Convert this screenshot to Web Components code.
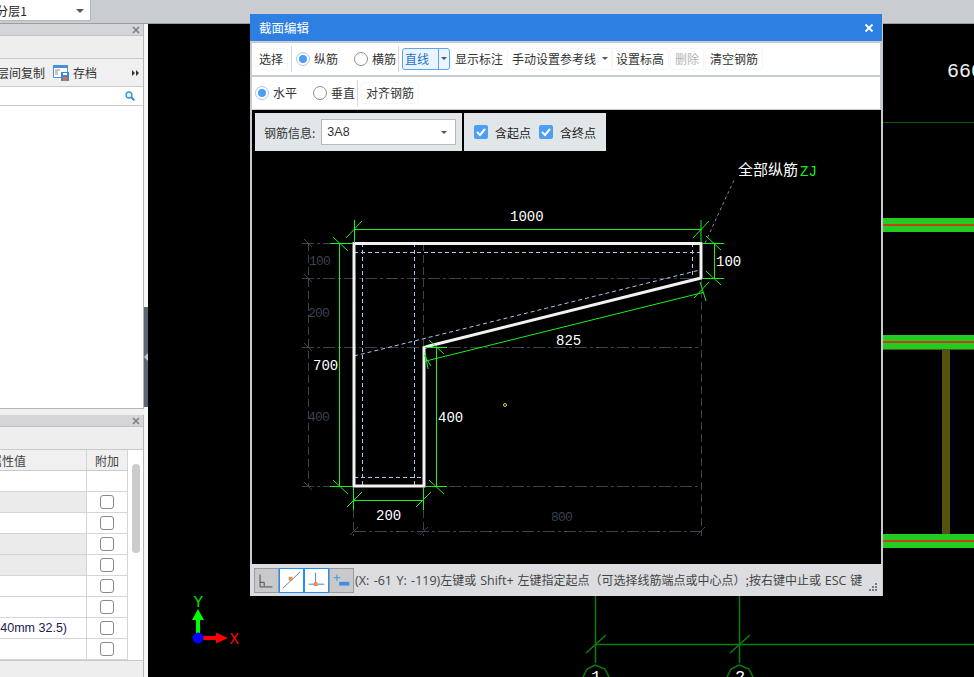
<!DOCTYPE html>
<html>
<head>
<meta charset="utf-8">
<title>截面编辑</title>
<style>
html,body{margin:0;padding:0;height:100%;overflow:hidden;background:#000;}
body{font:12px "Noto Sans CJK SC","Liberation Sans",sans-serif;color:#333;}
/* latin runs in the status line are set wider than the chinese ones */
status-bar span{font:12.5px "Open Sans","Noto Sans CJK SC",sans-serif;}
</style>
</head>
<body>
<app-desktop>
  <top-bar slot="top"></top-bar>
  <side-panel slot="left" style="height:385px">
    <panel-tools></panel-tools>
  </side-panel>
  <side-panel slot="left" style="flex:1">
    <prop-table></prop-table>
  </side-panel>
  <cad-view slot="main"></cad-view>
  <section-dialog slot="float" heading="截面编辑">
    <tool-row slot="tools">
      <tool-button>选择</tool-button>
      <tool-sep></tool-sep>
      <radio-item checked style="margin-left:4px">纵筋</radio-item>
      <radio-item style="margin-left:16px">横筋</radio-item>
      <tool-sep style="margin-left:2px"></tool-sep>
      <split-button style="margin-left:3px">直线</split-button>
      <tool-button>显示标注</tool-button>
      <tool-button style="margin-left:-1px" arrow>手动设置参考线</tool-button>
      <tool-button style="margin-left:-2px">设置标高</tool-button>
      <tool-button style="margin-left:1px" disabled>删除</tool-button>
      <tool-button style="margin-left:1px">清空钢筋</tool-button>
    </tool-row>
    <tool-row slot="tools">
      <radio-item checked style="margin-left:1px">水平</radio-item>
      <radio-item style="margin-left:16px">垂直</radio-item>
      <tool-sep style="margin-left:2px"></tool-sep>
      <tool-button style="margin-left:3px">对齐钢筋</tool-button>
    </tool-row>
    <section-drawing slot="canvas"></section-drawing>
    <status-bar slot="status"><span>(X: -61 Y: -119)</span>左键或 <span>Shift+</span> 左键指定起点（可选择线筋端点或中心点）;按右键中止或 <span>ESC</span> 键</status-bar>
  </section-dialog>
</app-desktop>

<script>
const FONT = '"Noto Sans CJK SC","Liberation Sans",sans-serif';

class AppDesktop extends HTMLElement {
  constructor() {
    super();
    this.attachShadow({ mode: "open" }).innerHTML = `
<style>
:host{display:grid;grid-template-rows:24px 653px;grid-template-columns:144px 4px 826px;width:974px;height:677px;position:relative;overflow:hidden;background:#000;}
.top{grid-column:1 / 4;}
.left{display:flex;flex-direction:column;gap:6px;background:#f0f0f0;min-height:0;}
.strip{background:#f7f7f7;position:relative;}
.grab{position:absolute;left:0;right:0;top:283px;height:100px;background:#5c6670;}
.grab::after{content:"";position:absolute;left:0;top:46px;border:4px solid transparent;border-right-color:#c5c8cc;border-left:0;}
.main{min-width:0;}
</style>
<div class="top"><slot name="top"></slot></div>
<div class="left"><slot name="left"></slot></div>
<div class="strip"><div class="grab"></div></div>
<div class="main"><slot name="main"></slot></div>
<slot name="float"></slot>`;
  }
}
customElements.define("app-desktop", AppDesktop);

class TopBar extends HTMLElement {
  constructor() {
    super();
    this.attachShadow({ mode: "open" }).innerHTML = `
<style>
:host{display:block;height:24px;box-sizing:border-box;background:#c9ccd1;border-bottom:1px solid #9b9ea3;}
.combo{width:91px;height:21px;box-sizing:border-box;background:#fff;border:1px solid #b5b7ba;border-width:0 1px 1px 0;display:flex;justify-content:flex-end;align-items:center;overflow:hidden;font-size:12px;color:#222;padding-right:63px;position:relative;white-space:nowrap;}
.combo::after{content:"";position:absolute;right:6px;top:9px;border:4px solid transparent;border-top-color:#555;border-bottom:0;}
</style>
<div class="combo">第1分层1</div>`;
  }
}
customElements.define("top-bar", TopBar);

class SidePanel extends HTMLElement {
  constructor() {
    super();
    this.attachShadow({ mode: "open" }).innerHTML = `
<style>
:host{display:flex;flex-direction:column;box-sizing:border-box;background:#eee;border-right:1px solid #b4b6b9;min-height:0;}
.head{height:12px;flex:none;background:#d3d5d9;border-bottom:1px solid #bfc1c4;box-sizing:border-box;position:relative;}
.head svg{position:absolute;right:3px;top:2px;}
.blank{height:23px;flex:none;background:#eee;border-bottom:1px solid #c9c9c9;box-sizing:border-box;}
::slotted(*){flex:1;min-height:0;}
</style>
<div class="head"><svg width="8" height="8" viewBox="0 0 8 8"><path d="M1 1l6 6M7 1l-6 6" stroke="#7c7f84" stroke-width="1.6"/></svg></div>
<div class="blank"></div>
<slot></slot>`;
  }
}
customElements.define("side-panel", SidePanel);

class PanelTools extends HTMLElement {
  constructor() {
    super();
    this.attachShadow({ mode: "open" }).innerHTML = `
<style>
:host{display:flex;flex-direction:column;background:#fff;border-bottom:1px solid #b4b6b9;}
.bar{height:28px;flex:none;box-sizing:border-box;background:#f0f0f0;border-bottom:1px solid #c9c9c9;display:flex;align-items:center;justify-content:flex-end;overflow:hidden;white-space:nowrap;color:#333;padding-right:3px;gap:4px;}
.bar svg{flex:none;}
.more{margin-left:31px;margin-right:1px;}
.search{height:19px;flex:none;box-sizing:border-box;border-bottom:1px solid #c9c9c9;display:flex;justify-content:flex-end;align-items:center;padding-right:8px;background:#fff;}
</style>
<div class="bar"><span>楼层间复制</span>
<svg style="margin-left:4px" width="16" height="16" viewBox="0 0 16 16"><path d="M.5 .5h14v12h-14z" fill="#fff" stroke="#4a8fdc"/><path d="M0 0h15v3H0z" fill="#4a8fdc"/><path d="M2 5h5M2 7h3M2 9h3" stroke="#888"/><path d="M8 7h8v9H8z" fill="#3d86d8"/><path d="M10 12h4v4h-4z" fill="#e8702a"/><path d="M10 8h4v2h-4z" fill="#fff"/></svg>
<span>存档</span>
<svg class="more" width="7" height="6" viewBox="0 0 7 6"><path d="M0 0l3 3-3 3zM4 0l3 3-3 3z" fill="#333"/></svg></div>
<div class="search"><svg width="10" height="10" viewBox="0 0 10 10"><circle cx="4" cy="4" r="3" fill="#dff0fb" stroke="#3f9ad6" stroke-width="1.4"/><path d="M6.3 6.3L9.4 9.4" stroke="#2f7fb8" stroke-width="1.8"/></svg></div>`;
  }
}
customElements.define("panel-tools", PanelTools);

class PropTable extends HTMLElement {
  constructor() {
    super();
    const root = this.attachShadow({ mode: "open" });
    // gray rows are the read-only ones, row 0 has no checkbox
    const rows = [
      { t: "", box: false }, { g: 1 }, {}, { g: 1 }, { g: 1 }, {}, {},
      { t: "(P.O 42.5 40mm 32.5)" }, {}
    ];
    let html = "";
    for (const r of rows) {
      html += `<div class="row"><div class="val ${r.g ? "gray" : ""}"><span>${r.t || ""}</span></div><div class="add">${r.box === false ? "" : '<i class="box"></i>'}</div></div>`;
    }
    root.innerHTML = `
<style>
:host{display:block;position:relative;background:#eee;}
.wrap{width:143px;background:#fff;border-bottom:1px solid #c9c9c9;box-sizing:border-box;position:relative;}
.row,.hd{display:grid;grid-template-columns:87px 41px;height:21px;box-sizing:border-box;border-bottom:1px solid #d5d5d5;width:128px;}
.row:last-of-type{height:18px;border-bottom:0;}
.hd{background:#f0f0f0;border-bottom:1px solid #c9c9c9;color:#444;}
.hd>div{display:flex;align-items:center;overflow:hidden;white-space:nowrap;}
.hd>div:first-child{justify-content:flex-end;padding-right:60px;border-right:1px solid #d5d5d5;}
.hd>div:last-child{justify-content:center;border-right:1px solid #d5d5d5;}
.val{display:flex;justify-content:flex-end;align-items:center;overflow:hidden;white-space:nowrap;border-right:1px solid #d5d5d5;color:#1a1a55;font:12.5px "Liberation Sans",sans-serif;padding-right:19px;}
.gray{background:#ebebeb;}
.add{display:flex;align-items:center;justify-content:center;border-right:1px solid #d5d5d5;}
.box{width:14px;height:14px;box-sizing:border-box;border:1px solid #8a8a8a;border-radius:3px;background:#fff;}
.thumb{position:absolute;left:132px;top:14px;width:8px;height:89px;border-radius:4px;background:#ccc;}
</style>
<div class="wrap">
<div class="hd"><div>属性值</div><div>附加</div></div>
${html}
<div class="thumb"></div>
</div>`;
  }
}
customElements.define("prop-table", PropTable);

class CadView extends HTMLElement {
  constructor() {
    super();
    // viewBox uses window coordinates
    this.attachShadow({ mode: "open" }).innerHTML = `
<style>
:host{display:block;width:826px;height:653px;background:#000;}
svg{display:block;}
text{font-family:"Liberation Mono",monospace;}
</style>
<svg width="826" height="653" viewBox="148 24 826 653">
<path d="M883 122.500H974" stroke="#0b5a0b"/>
<g>
  <rect x="883" y="218" width="91" height="14" fill="#22cc22"/><rect x="883" y="224" width="91" height="2" fill="#c8401a"/>
  <rect x="883" y="335" width="91" height="14" fill="#22cc22"/><rect x="883" y="341" width="91" height="2" fill="#c8401a"/>
  <rect x="883" y="349" width="91" height="1" fill="#4a5a10"/>
  <rect x="942" y="350" width="8" height="184" fill="#54530f"/>
  <rect x="883" y="534" width="91" height="14" fill="#22cc22"/><rect x="883" y="540" width="91" height="2" fill="#c8401a"/>
</g>
<text x="947" y="77" fill="#eee" font-size="20">660</text>
<g stroke="#0a7d0a" stroke-width="1.500" fill="none">
  <path d="M595.500 596V663M739.500 596V663M595.500 644.500H974"/>
  <path d="M586 653L606 635M730 653L750 635"/>
  <path d="M583 677L587 669L595 665L605 669L609 677M727 677L731 669L739 665L749 669L753 677"/>
</g>
<text x="591" y="682" fill="#fff" font-size="17">1</text>
<text x="735" y="682" fill="#fff" font-size="17">2</text>
<g>
  <path d="M198 638V618" stroke="#00ff00" stroke-width="4"/><path d="M198 609L204 620H192z" fill="#00ff00"/>
  <path d="M198 638H218" stroke="#ff0000" stroke-width="4"/><path d="M228 638L216 632.500V643.500z" fill="#ff0000"/>
  <circle cx="198" cy="638" r="5.500" fill="#0000ff"/>
  <text x="193.500" y="607" fill="#00e000" font-size="16">Y</text>
  <text x="229.500" y="644" fill="#ff0000" font-size="16">X</text>
</g>
</svg>`;
  }
}
customElements.define("cad-view", CadView);

class SectionDialog extends HTMLElement {
  constructor() {
    super();
    this.attachShadow({ mode: "open" }).innerHTML = `
<style>
:host{position:absolute;left:250px;top:14px;width:633px;height:582px;box-sizing:border-box;background:#c6cad1;display:flex;flex-direction:column;border-right:1px solid #c6cad1;}
.title{height:27px;flex:none;background:#2e7fe2;color:#fff;display:flex;align-items:center;justify-content:space-between;padding:0 8px 0 9px;font-size:12.500px;}
.tools{padding:2px 2px 0;display:flex;flex-direction:column;gap:2px;flex:none;}
.canvas{margin:1px 1px 0 2px;flex:none;}
</style>
<div class="title"><span id="h"></span><svg width="10" height="10" viewBox="0 0 10 10"><path d="M1.500 1.500l7 7M8.500 1.500l-7 7" stroke="#fff" stroke-width="1.800"/></svg></div>
<div class="tools"><slot name="tools"></slot></div>
<div class="canvas"><slot name="canvas"></slot></div>
<slot name="status"></slot>`;
    this.shadowRoot.getElementById("h").textContent = this.getAttribute("heading");
  }
}
customElements.define("section-dialog", SectionDialog);

class ToolRow extends HTMLElement {
  constructor() {
    super();
    this.attachShadow({ mode: "open" }).innerHTML = `
<style>:host{display:flex;align-items:center;height:32px;box-sizing:border-box;padding-bottom:1px;background:#fff;padding-left:2px;font-size:12px;color:#333;white-space:nowrap;}</style>
<slot></slot>`;
  }
}
customElements.define("tool-row", ToolRow);

class ToolSep extends HTMLElement {
  constructor() {
    super();
    this.attachShadow({ mode: "open" }).innerHTML = `
<style>:host{display:block;width:1px;height:26px;background:#d8d8d8;margin-left:3px;}</style>`;
  }
}
customElements.define("tool-sep", ToolSep);

class ToolButton extends HTMLElement {
  constructor() {
    super();
    const arrow = this.hasAttribute("arrow");
    this.attachShadow({ mode: "open" }).innerHTML = `
<style>
:host{display:inline-flex;align-items:center;height:22px;box-sizing:border-box;padding:0 4px;border:1px solid #f6f6f6;border-radius:3px;color:#333;}
:host([disabled]){color:#b4b4b4;}
i{margin-left:6px;border:3px solid transparent;border-top:3px solid #555;border-bottom:0;}
</style>
<slot></slot>${arrow ? "<i></i>" : ""}`;
  }
}
customElements.define("tool-button", ToolButton);

class SplitButton extends HTMLElement {
  constructor() {
    super();
    this.attachShadow({ mode: "open" }).innerHTML = `
<style>
:host{display:inline-flex;height:22px;width:48px;box-sizing:border-box;border:1px solid #5aa5ee;border-radius:3px;background:#eaf4fe;color:#1f6fc4;}
.a{flex:1;display:flex;align-items:center;padding-left:2px;}
.b{width:10px;border-left:1px solid #5aa5ee;display:flex;align-items:center;justify-content:center;}
i{border:3px solid transparent;border-top:3px solid #555;border-bottom:0;}
</style>
<div class="a"><slot></slot></div><div class="b"><i></i></div>`;
  }
}
customElements.define("split-button", SplitButton);

class RadioItem extends HTMLElement {
  constructor() {
    super();
    this.attachShadow({ mode: "open" }).innerHTML = `
<style>
:host{display:inline-flex;align-items:center;gap:4px;color:#333;}
.r{width:14px;height:14px;box-sizing:border-box;border:1px solid #8f8f8f;border-radius:50%;background:#fff;display:flex;align-items:center;justify-content:center;}
:host([checked]) .r{border-color:#aac8ea;}
:host([checked]) .r::after{content:"";width:8px;height:8px;border-radius:50%;background:#4d9ef5;}
</style>
<span class="r"></span><slot></slot>`;
  }
}
customElements.define("radio-item", RadioItem);

class CheckItem extends HTMLElement {
  constructor() {
    super();
    this.attachShadow({ mode: "open" }).innerHTML = `
<style>
:host{display:inline-flex;align-items:center;gap:7px;color:#222;}
.c{width:14px;height:14px;border-radius:2px;background:#4d9ef5;display:flex;}
</style>
<span class="c"><svg width="14" height="14" viewBox="0 0 14 14"><path d="M3 7l3 3 5-6" fill="none" stroke="#fff" stroke-width="2"/></svg></span><slot></slot>`;
  }
}
customElements.define("check-item", CheckItem);

class SectionDrawing extends HTMLElement {
  constructor() {
    super();
    this.attachShadow({ mode: "open" }).innerHTML = `
<style>
:host{display:block;width:629px;height:454px;background:#000;position:relative;}
svg{display:block;}
text{font-family:"Liberation Mono",monospace;font-size:14px;}
.faint text{font-size:13px;letter-spacing:-.8px;}
.cjk{font-family:${FONT};font-size:15px;}
.info{position:absolute;left:3px;top:3px;display:flex;gap:2px;font-size:12px;}
.box{height:38px;box-sizing:border-box;background:#e1e6e9;display:flex;align-items:center;}
.one{width:207px;padding-left:9px;color:#333;}
.two{width:142px;padding-left:10px;gap:8px;}
.sel{margin-left:6px;width:135px;height:26px;box-sizing:border-box;background:#fff;border:1px solid #b5b9bc;display:flex;align-items:center;justify-content:space-between;padding:0 8px 0 5px;font:12.500px "Liberation Sans",sans-serif;}
.sel i{border:3px solid transparent;border-top:3px solid #555;border-bottom:0;}
</style>
<svg width="629" height="454" viewBox="252 110 629 454">
<g stroke="#3b4250" fill="none">
  <path stroke-dasharray="12 3 3 3" d="M302 243.500H354M302 278.500H701M302 347.500H701M302 486.500H701M354 531.500H701"/>
  <path stroke-dasharray="8 4" d="M308.500 243V486M423.500 243V347M701.500 278V536M353.500 486V536M423.500 486V536"/>
  <path d="M304 239L312 247M304 274L312 282M304 343L312 351M304 482L312 490M350 535L358 527M420 535L428 527M697 535L705 527"/>
</g>
<g class="faint" fill="#3b4250"><text x="309" y="265">100</text><text x="308" y="317">200</text><text x="308" y="421">400</text><text x="551" y="521">800</text></g>
<path d="M705 243L735 178" stroke="#8a8a8a" stroke-dasharray="3 3" fill="none"/>
<g stroke="#a9c8ef" stroke-dasharray="4 3" fill="none">
  <path d="M354 252.500H701M362.500 243V486M414.500 243V486M354 477.500H424M692.500 243V278"/>
  <path d="M354 356L700 270"/>
</g>
<path d="M354 243.500H701V278L429 346L424 347.500V486H354z" fill="none" stroke="#f2f2f2" stroke-width="3"/>
<g stroke="#1cf01c" stroke-width="1" fill="none">
  <path d="M354 229.500H701M354.500 220V243M701 220V243M346 238L362 221M693 238L709 221"/>
  <path d="M339.500 243V486M330 243.500H352M330 486.500H352M333 237L348 251M333 480L348 494"/>
  <path d="M714.500 243V278M703 243.500H724M703 278.500H724M706 236L721 250M706 271L721 285"/>
  <path d="M436.500 347V486M425 347.500H447M425 486.500H447M429 340L444 354M429 480L444 494"/>
  <path d="M354 500.500H424M353.500 488V510M423.500 488V510M347 507L362 492M416 507L431 492"/>
  <path d="M426 361L703 292.500M425 352L428 369M424 355L431 366M700 282L706 301M694 298L709 282"/>
</g>
<g fill="#fff">
  <text x="510" y="221">1000</text><text x="716" y="266">100</text><text x="556" y="345">825</text>
  <text x="313" y="370">700</text><text x="438" y="422">400</text><text x="376" y="520">200</text>
</g>
<circle cx="505" cy="405" r="1.500" fill="none" stroke="#f0d040"/>
<text class="cjk" x="738" y="175" fill="#fff">全部纵筋</text>
<text x="800" y="176" fill="#1cf01c">ZJ</text>
</svg>
<div class="info">
  <div class="box one">钢筋信息:<div class="sel">3A8<i></i></div></div>
  <div class="box two"><check-item>含起点</check-item><check-item>含终点</check-item></div>
</div>`;
  }
}
customElements.define("section-drawing", SectionDrawing);

class StatusBar extends HTMLElement {
  constructor() {
    super();
    this.attachShadow({ mode: "open" }).innerHTML = `
<style>
:host{display:flex;align-items:center;flex:1;background:#dcdde0;padding-left:4px;position:relative;color:#444;white-space:nowrap;font-size:12px;word-spacing:1.200px;}
.b{width:25px;height:25px;box-sizing:border-box;flex:none;border:1px solid #9a9a9a;background:#c9c9cb;display:block;}
.on{border:1.500px solid #1e90ff;background:#fff;}
.grip{position:absolute;right:5px;bottom:5px;}
.t{margin-left:1px;}
</style>
<svg class="b" viewBox="0 0 25 25"><path d="M5.500 6V19.500H19M5.500 14.500H10V19" fill="none" stroke="#444"/></svg>
<svg class="b on" viewBox="0 0 25 25"><path d="M3 21L22 3" stroke="#4a7fc0"/><rect x="10" y="9" width="3" height="3" fill="#f4a060" stroke="#e8802a"/></svg>
<svg class="b on" viewBox="0 0 25 25"><path d="M4 16.500H21M11.500 4V16" stroke="#3f7fc8"/><rect x="10" y="15" width="3" height="3" fill="#f4a060" stroke="#e8802a"/></svg>
<svg class="b" viewBox="0 0 25 25"><path d="M4 9.500H11M7.500 6V13" stroke="#3f8fe0"/><rect x="10" y="14" width="11" height="4" fill="#3f8fe0"/></svg>
<span class="t"><slot></slot></span>
<svg class="grip" width="8" height="8" viewBox="0 0 8 8" fill="#77797d"><path d="M6 0h2v2H6zM3 3h2v2H3zM6 3h2v2H6zM0 6h2v2H0zM3 6h2v2H3zM6 6h2v2H6z"/></svg>`;
  }
}
customElements.define("status-bar", StatusBar);
</script>
</body>
</html>
